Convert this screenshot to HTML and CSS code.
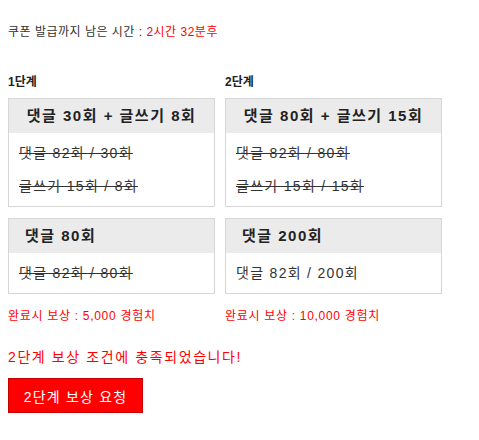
FILE: index.html
```html
<!DOCTYPE html>
<html lang="ko">
<head>
<meta charset="utf-8">
<link rel="stylesheet" href="styles.css">
</head>
<body>
<p class="timer">쿠폰 발급까지 남은 시간 : <span class="red">2시간 32분후</span></p>
<div class="stages">
  <div class="stage stage-1">
    <h3 class="stage-title">1단계</h3>
    <div class="card">
      <div class="card-head center">댓글 30회 + 글쓰기 8회</div>
      <div class="card-body">
        <p class="done">댓글 82회 / 30회</p>
        <p class="done">글쓰기 15회 / 8회</p>
      </div>
    </div>
    <div class="card">
      <div class="card-head">댓글 80회</div>
      <div class="card-body">
        <p class="done">댓글 82회 / 80회</p>
      </div>
    </div>
    <p class="reward">완료시 보상 : 5,000 경험치</p>
  </div>
  <div class="stage stage-2">
    <h3 class="stage-title">2단계</h3>
    <div class="card">
      <div class="card-head center">댓글 80회 + 글쓰기 15회</div>
      <div class="card-body">
        <p class="done">댓글 82회 / 80회</p>
        <p class="done">글쓰기 15회 / 15회</p>
      </div>
    </div>
    <div class="card">
      <div class="card-head">댓글 200회</div>
      <div class="card-body">
        <p>댓글 82회 / 200회</p>
      </div>
    </div>
    <p class="reward">완료시 보상 : 10,000 경험치</p>
  </div>
</div>
<p class="notice">2단계 보상 조건에 충족되었습니다!</p>
<button class="btn" type="button">2단계 보상 요청</button>
</body>
</html>
```
FILE: styles.css
```css
* { box-sizing: border-box; }
body {
  margin: 8px;
  font-family: "Liberation Sans", "Noto Sans CJK KR", sans-serif;
  color: #333;
  background: #fff;
}
p { margin: 0; }
.timer {
  margin-top: 16px;
  font-size: 12px;
  line-height: 16px;
  letter-spacing: 0.5px;
  color: #333;
}
.red { color: #ff0000; }
.stages {
  display: flex;
  gap: 10px;
  margin-top: 34px;
  align-items: flex-start;
}
.stage { display: flex; flex-direction: column; }
.stage-1 { width: 207px; }
.stage-2 { width: 217px; }
.stage-title {
  margin: 0 0 8px;
  font-size: 12px;
  line-height: 16px;
  font-weight: bold;
  color: #222;
}
.card {
  border: 1px solid #d6d6d6;
  margin-bottom: 11px;
}
.card-head {
  background: #ebebeb;
  height: 34px;
  line-height: 34px;
  padding: 0 16px;
  font-size: 15px;
  font-weight: bold;
  letter-spacing: 1.5px;
  color: #222;
  white-space: nowrap;
}
.card-head.center { text-align: center; padding: 0; }
.card-body {
  padding: 4px 10px 3px;
}
.card-body p {
  font-size: 14px;
  line-height: 33px;
  letter-spacing: 1.3px;
  color: #333;
  white-space: nowrap;
}
.card-body p.done { text-decoration: line-through; }
.reward {
  margin-top: 3px;
  font-size: 12px;
  line-height: 16px;
  letter-spacing: 0.7px;
  color: #ff0000;
}
.notice {
  margin-top: 24px;
  font-size: 14px;
  line-height: 18px;
  letter-spacing: 1.6px;
  color: #ff0000;
}
.btn {
  display: block;
  margin-top: 12px;
  width: 135px;
  height: 35px;
  background: #ff0000;
  border: 1px solid #c40000;
  color: #fff;
  font-family: "Liberation Sans", "Noto Sans CJK KR", sans-serif;
  font-size: 14px;
  letter-spacing: 1.2px;
  padding: 0;
}
```
